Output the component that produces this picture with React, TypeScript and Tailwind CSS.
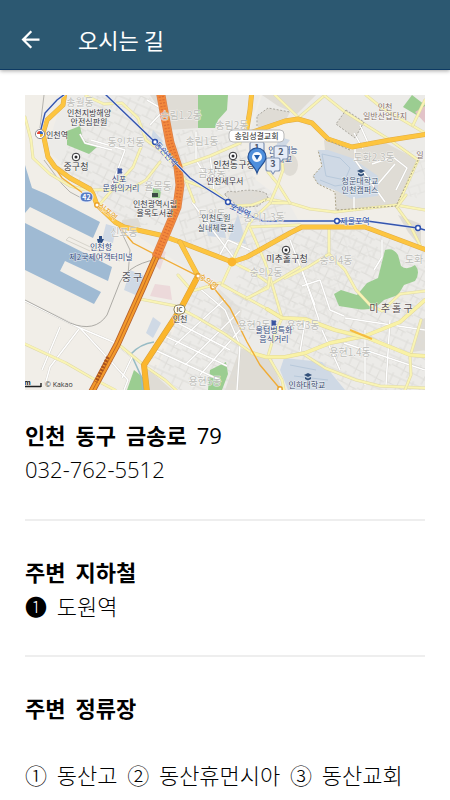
import React from "react";
import { MdArrowBack } from "react-icons/md";

const GAP = "\u00a0 ";

type Label = {
  x: number;
  y: number;
  text: string;
  size?: number;
  color?: string;
  rotate?: number;
};

const AREA = "#bdbdb9";
const NAVY = "#33497c";

const areaNames: Label[] = [
  { x: 80, y: 106, text: "송월동", size: 10 },
  { x: 126, y: 146, text: "동인천동", size: 10 },
  { x: 181, y: 119, text: "송림1.2동", size: 10 },
  { x: 232, y: 129, text: "송림2동", size: 10 },
  { x: 202, y: 145, text: "송림1동", size: 10 },
  { x: 212, y: 177, text: "금창동", size: 10 },
  { x: 158, y: 190, text: "율목동", size: 10 },
  { x: 374, y: 161, text: "도화2.3동", size: 10 },
  { x: 124, y: 236, text: "신포동", size: 10 },
  { x: 212, y: 218, text: "도원동", size: 10 },
  { x: 264, y: 221, text: "숭의1.3동", size: 10 },
  { x: 266, y: 276, text: "숭의2동", size: 10 },
  { x: 336, y: 264, text: "숭의4동", size: 10 },
  { x: 414, y: 263, text: "도화", size: 10 },
  { x: 254, y: 329, text: "용현2동", size: 10 },
  { x: 303, y: 329, text: "용현3동", size: 10 },
  { x: 350, y: 356, text: "용현1.4동", size: 10 },
  { x: 205, y: 385, text: "용현5동", size: 10 },
];

const places: Label[] = [
  { x: 89, y: 116, text: "인천지방해양" },
  { x: 89, y: 125, text: "안전심판원" },
  { x: 57, y: 138, text: "인천역" },
  { x: 76, y: 170, text: "중구청", size: 9 },
  { x: 119, y: 182, text: "신포", color: NAVY },
  { x: 121, y: 191, text: "문화의거리", color: NAVY },
  { x: 155, y: 207, text: "인천광역시립" },
  { x: 155, y: 216, text: "율목도서관" },
  { x: 234, y: 168, text: "인천동구청", size: 9 },
  { x: 225, y: 184, text: "인천세무서" },
  { x: 216, y: 221, text: "인천도원", color: "#3e4c55" },
  { x: 216, y: 231, text: "실내체육관", color: "#3e4c55" },
  { x: 385, y: 110, text: "인천", color: "#856e69" },
  { x: 385, y: 119, text: "일반산업단지", color: "#856e69" },
  { x: 360, y: 184, text: "청운대학교", color: "#405575" },
  { x: 360, y: 193, text: "인천캠퍼스", color: "#405575" },
  { x: 283, y: 153, text: "인천재능", color: NAVY },
  { x: 281, y: 162, text: "대학교", color: NAVY },
  { x: 101, y: 250, text: "인천항", color: NAVY },
  { x: 101, y: 260, text: "제2국제여객터미널", color: NAVY },
  { x: 132, y: 281, text: "중 구", size: 10, color: "#52525b" },
  { x: 287, y: 262, text: "미추홀구청", size: 9 },
  { x: 391, y: 312, text: "미 추 홀 구", size: 10, color: "#594f51" },
  { x: 180, y: 322, text: "인천" },
  { x: 274, y: 333, text: "물텀벙특화", color: NAVY },
  { x: 274, y: 342, text: "음식거리", color: NAVY },
  { x: 307, y: 388, text: "인하대학교", color: "#344768" },
  { x: 355, y: 224, text: "제물포역", color: "#2448a2" },
  { x: 239, y: 213, text: "도원역", color: "#2448a2", rotate: 24 },
  { x: 164, y: 156, text: "동인천역", color: "#2448a2", rotate: 49 },
  { x: 106, y: 214, text: "신포역", color: "#e39c18", rotate: 40 },
  { x: 207, y: 284, text: "숭의역", color: "#e39c18", rotate: 34 },
  { x: 420, y: 158, text: "일", color: "#856e69" },
];

function MapLabel({ x, y, text, size = 8, color = "#34343a", rotate = 0 }: Label) {
  return (
    <text
      x={x}
      y={y}
      fontSize={size}
      fill={color}
      stroke="#ffffff"
      strokeWidth="1"
      strokeOpacity="0.7"
      strokeLinejoin="round"
      paintOrder="stroke"
      textAnchor="middle"
      transform={rotate ? `rotate(${rotate} ${x} ${y})` : undefined}
    >
      {text}
    </text>
  );
}

function Road({ d, w, fill, edge }: { d: string; w: number; fill: string; edge: string }) {
  return (
    <g fill="none" strokeLinejoin="round" strokeLinecap="round">
      <path d={d} stroke={edge} strokeWidth={w + 1} />
      <path d={d} stroke={fill} strokeWidth={w} />
    </g>
  );
}

const minorRoads = [
  "M25 117 L31 140 L33 158 L50 174 L70 186 L86 190",
  "M86 96 L104 104 L122 103 L138 118 L146 140 L160 150 L174 165 L186 181 L194 202",
  "M92 190 L130 189 L146 180 L160 162",
  "M100 204 L112 190 L133 167 L141 147",
  "M178 167 L210 156 L240 143 L246 130",
  "M186 181 L214 191 L232 206 L252 205 L268 199 L290 203",
  "M297 119 L325 95",
  "M366 95 L382 108 L425 133",
  "M325 96 L345 112 L390 140 L418 160 L397 207",
  "M425 100 L413 125",
  "M270 203 L290 203 L310 209 L335 212 L396 205 L425 210",
  "M268 172 L278 184 L290 203",
  "M281 150 L283 170 L278 184 L270 203",
  "M275 95 L297 116",
  "M397 207 L410 225 L421 247",
  "M406 195 L397 207",
  "M248 227 L300 225",
  "M329 229 L329 254 L345 270 L356 290 L370 305 L382 311 L400 294 L425 291",
  "M285 278 L308 267 L329 254",
  "M270 203 L250 222 L242 240 L232 262 L222 284 L247 299 L270 285 L300 267",
  "M250 228 L265 262 L272 284 L282 318",
  "M232 262 L254 273 L270 284",
  "M178 275 L192 291 L220 283",
  "M140 299 L176 306 L198 318 L225 334 L252 353",
  "M222 285 L247 298 L267 309",
  "M247 298 L268 288 L270 275",
  "M282 318 L274 336 L268 356 L282 380 L284 390",
  "M305 355 L325 368 L356 380 L380 386 L425 388",
  "M421 320 L410 357 L411 375 L405 390",
  "M25 344 L66 363 L92 378 L115 390",
  "M118 344 L146 367 L165 380 L176 390",
];

const wideMinorRoads = [
  "M252 353 L266 357 L285 357 L305 353 L330 343 L365 336 L400 322 L425 300",
  "M267 309 L282 318 L305 319 L335 330 L368 338 L410 355 L425 356",
];

const streets = [
  "M25 301 L80 328 L118 344",
  "M80 328 L128 380 L124 390",
  "M117 345 L132 357 L122 378",
  "M60 327 L42 370",
  "M79 329 L50 367 L45 385",
  "M80 134 L85 143 L112 150 M91 140 L125 150 L110 190",
  "M147 100 L164 110 L150 125",
  "M196 132 L196 160 L210 183",
  "M210 155 L214 190",
  "M355 148 L355 160 L385 202",
  "M372 164 L393 157 L407 168 L396 190",
  "M378 184 L395 164",
  "M360 125 L369 145 M354 133 L363 149",
  "M354 197 L354 212",
  "M192 202 L214 232 L234 258",
  "M228 240 L218 258 M228 240 L250 250",
  "M290 240 L315 305",
  "M302 270 L319 320",
  "M382 240 L382 257 L374 270",
  "M302 286 L320 280 L330 310 L344 316",
  "M198 287 L225 310 L240 345 L237 390",
  "M155 350 L220 380 M163 335 L227 366 M172 320 L230 350",
  "M175 345 L225 299 M185 365 L240 311 M200 375 L240 330",
  "M345 318 L425 330 M344 343 L425 370",
  "M365 330 L365 385 M390 320 L386 385",
  "M305 322 L300 352 M322 330 L340 370",
];

const mainRoute =
  "M65 92 L63 105 L47 120 L43 133 L48 157 L55 167 L70 178 L90 189 L93 194 L97 205 L115 222 L124 227 L160 235 L180 242 L232 262 L247 257 L290 233 L302 227 L365 227 L421 248 L430 251";

const northRoutes = [
  "M252 90 L250 110 L246 134",
  "M247 134 L285 121 L298 119 L312 123 L328 139 L352 147 L390 140 L428 134",
];

const highwayNorth = "M160 90 L165 117 L170 143 L178 167 L180 185 L177 207 L170 224 L156 257";
const highway = `${highwayNorth} L143 287 L117 345 L90 395`;

function Office({ x, y }: { x: number; y: number }) {
  return (
    <g>
      <circle cx={x} cy={y} r="3.8" fill="#fff" stroke="#2c2c30" />
      <circle cx={x} cy={y} r="1.5" fill="#2c2c30" />
    </g>
  );
}

function Cap({ x, y }: { x: number; y: number }) {
  return (
    <g fill="#33507a">
      <path d={`M${x - 4} ${y - 1} l4 -2 l4 2 l-4 2 z`} />
      <path d={`M${x - 3} ${y + 1} l3 1.5 l3 -1.5 v2 l-3 1.5 l-3 -1.5 z`} />
    </g>
  );
}

function StopBadge({ x, y, n }: { x: number; y: number; n: string }) {
  return (
    <g>
      <path
        d={`M${x - 5} ${y - 7} h10 q2 0 2 2 v9 q0 2 -2 2 h-3 l-2 3 l-2 -3 h-3 q-2 0 -2 -2 v-9 q0 -2 2 -2 z`}
        fill="#e6ecf7"
        stroke="#8496b6"
        strokeWidth="1.2"
      />
      <text x={x} y={y + 2} fontSize="9" fontWeight="700" fill="#4d5668" textAnchor="middle">
        {n}
      </text>
    </g>
  );
}

function LocationMap() {
  return (
    <svg
      viewBox="25 95 400 295"
      role="img"
      aria-label="인천 동구 금송로 79 지도"
      className="block h-auto w-full font-['Noto_Sans_CJK_KR',sans-serif]"
    >
      <defs>
        <pattern id="blocksA" width="22" height="18" patternUnits="userSpaceOnUse" patternTransform="rotate(24)">
          <path d="M0 3 H22 M0 11 L22 13 M5 0 V11 M14 3 L13 18 M19 12 V18" fill="none" stroke="#dddcd8" />
        </pattern>
        <pattern id="blocksB" width="19" height="21" patternUnits="userSpaceOnUse" patternTransform="rotate(-17)">
          <path d="M0 5 H19 M0 14 L19 12 M4 5 V14 M12 0 L13 21 M17 13 V21" fill="none" stroke="#dddcd8" />
        </pattern>
      </defs>

      <rect x="25" y="95" width="400" height="295" fill="#f1eee8" />

      <g fill="#ecebe8">
        <path d="M64 95 H260 L247 134 L236 145 L256 180 L290 205 L302 227 L365 227 L425 250 V390 H148 L198 276 L124 227 L92 188 L46 150 Z" />
        <path d="M262 95 H425 V210 L396 206 L418 160 L352 147 L328 139 L297 119 L250 132 Z" />
      </g>

      <g fill="#dfdcd5">
        <path d="M150 95 H198 V128 L168 130 L160 110 Z" />
        <path d="M262 95 H316 L297 114 L278 106 Z" />
        <path d="M257 116 L268 108 L290 112 L286 120 L258 128 Z" />
        <path d="M346 110 L364 122 L355 138 L336 124 Z" />
        <path d="M324 140 L352 150 L386 143 L418 160 L396 205 L336 212 L335 190 L350 165 L325 150 Z" />
        <path d="M398 215 L421 224 V248 L408 232 Z" />
        <path d="M240 348 L272 358 L282 390 H225 Z" />
        <path d="M147 368 L172 390 H146 Z" />
        <path d="M225 195 Q225 190 236 192 Q250 188 266 193 L268 198 L258 206 L240 208 Z" />
        <path d="M122 220 L138 218 L141 227 L122 226 Z" />
        <path d="M218 288 L242 310 L236 340 L222 330 Z" opacity=".6" />
        <path d="M421 320 L425 318 V350 L413 352 Z" />
      </g>
      <ellipse cx="290" cy="165" rx="8" ry="11" fill="#dfdcd5" />

      <path d="M67 150 L92 96 H150 L175 165 L170 225 L124 225 L92 188 L58 168 Z" fill="url(#blocksA)" />
      <path d="M176 130 H240 L256 180 L284 205 L290 232 L232 262 L180 240 Z" fill="url(#blocksB)" />
      <path d="M242 258 L302 230 H365 L425 252 V390 H345 L282 350 L222 330 Z" fill="url(#blocksA)" />
      <path d="M242 262 L350 232 L380 252 L336 300 L330 340 L282 318 Z" fill="url(#blocksB)" opacity=".5" />
      <path d="M192 288 L240 310 L240 390 H180 L148 365 Z" fill="url(#blocksA)" />
      <path d="M395 150 H425 V200 L402 195 Z" fill="url(#blocksB)" opacity=".5" />

      <g fill="#9fbad3">
        <path d="M25 165 L32 188 L46 194 L100 222 L93 238 L30 207 L25 213 Z" />
        <path d="M25 223 L112 267 L108 281 L65 261 L60 271 L101 292 L94 304 L25 270 Z" />
      </g>
      <path d="M66 240 L69 237 L120 261 M66 240 L90 251" fill="none" stroke="#d6d3cb" />

      <g fill="#9bcd91">
        <path d="M198 95 H228 L227 110 L218 120 L215 128 H198 Z" />
        <path d="M67 131 L80 126 L83 140 L97 147 L89 154 L67 145 Z" />
        <path d="M412 95 L425 105 V120 L403 107 Z" />
        <path d="M385 250 Q393 247 398 255 L401 266 Q407 271 415 265 Q421 272 415 281 L404 285 L398 295 L384 300 Q373 312 358 309 L339 306 L334 294 L341 290 L357 295 L367 283 L378 278 Z" />
        <path d="M134 370 L144 378 L145 390 H127 Z" />
        <path d="M210 370 L226 362 L228 374 L222 390 H208 Z" />
        <path d="M153 188 L161 190 L160 198 L152 198 Z" />
      </g>
      <path d="M415 112 L425 106 V123 Z" fill="#e2c3c8" />

      <g fill="#cfd9e5">
        <path d="M318 150 H328 L352 158 L378 176 L378 196 L352 199 L337 191 L318 184 L313 176 L322 166 Z" />
        <path d="M284 358 L322 362 L345 390 H288 L280 370 Z" />
        <path d="M238 214 L246 244 L228 240 Z" />
        <path d="M206 225 L222 215 L226 238 L208 236 Z" />
        <path d="M106 224 L116 227 L113 243 L102 240 Z" />
        <path d="M130 270 L144 276 L138 296 L124 290 Z" />
        <path d="M153 317 L161 323 L153 338 L146 333 Z" />
        <path d="M280 137 L290 140 L284 148 L276 146 Z" />
        <path d="M153 130 L163 141 L159 150 L150 143 Z" />
      </g>
      <g fill="none" stroke="#b8c9db">
        <path d="M322 154 L340 158 L350 168 L345 180 L326 176 Z" />
        <path d="M320 180 L335 186 L348 184" />
        <path d="M290 365 L316 370 M294 376 L328 380" />
      </g>
      <path d="M155 284 L170 286 L172 300 L150 296 Z M156 248 L166 252 L160 270 L152 262 Z" fill="#ecd9da" />
      <path d="M131 354 Q140 344 154 342 M131 354 L141 376 L143 390" fill="none" stroke="#98bcc5" strokeWidth="1.6" />

      <g fill="none" stroke="#cfcdc7" strokeWidth="2.2" strokeLinejoin="round">
        {streets.map((d) => (
          <path key={d} d={d} />
        ))}
      </g>
      <g fill="none" stroke="#ffffff" strokeWidth="1.5" strokeLinejoin="round">
        {streets.map((d) => (
          <path key={d} d={d} />
        ))}
      </g>
      <path d="M25 300 L70 323 Q95 333 107 315 L120 282 Q130 262 165 258" fill="none" stroke="#adaba6" />
      <path d="M40 128 L44 95 M44 160 L62 184 L70 192 L85 200 M118 225 L130 250 L128 275" fill="none" stroke="#b5b3ae" />

      {minorRoads.map((d) => (
        <Road key={d} d={d} w={2} fill="#f9f4b4" edge="#e0d9a8" />
      ))}
      {wideMinorRoads.map((d) => (
        <Road key={d} d={d} w={3} fill="#f9f2a6" edge="#e0d79c" />
      ))}

      <g fill="none" stroke="#f0ac36" strokeWidth="1.4">
        <path d="M52 163 L62 178 L87 196" />
        <path d="M115 222 L133 243 L160 257 L198 276 L213 287 L230 308 L247 342 L260 365 L281 390" />
      </g>
      <path d="M350 330 L372 339" stroke="#f6bc3d" strokeWidth="2" />

      {northRoutes.map((d) => (
        <Road key={d} d={d} w={4} fill="#fdc540" edge="#e0ac45" />
      ))}
      <Road d={mainRoute} w={4} fill="#fdc540" edge="#e0ac45" />
      <Road d="M180 242 L198 276" w={4} fill="#fdc540" edge="#e0ac45" />
      <Road d="M198 276 L180 310 L144 365 L147 392" w={5} fill="#fbb62c" edge="#d9a240" />
      <circle cx="232" cy="262" r="4.4" fill="#fbb62c" />
      <path
        d="M325 139 L350 150 M418 160 L396 206 L336 210 L335 192 L318 184 L313 176 L322 166 L318 150"
        fill="none"
        stroke="#aaa288"
        strokeDasharray="2 1.6"
      />
      <path
        d="M346 110 L364 122 L355 138 L336 124 Z M225 195 Q225 190 236 192 Q250 188 266 193 L268 198 L258 206 L240 208 Z M257 126 V116 L268 108 L290 112"
        fill="none"
        stroke="#aaa79f"
        strokeDasharray="2 1.6"
      />

      <g fill="none">
        <path d={highway} stroke="#b5602d" strokeWidth="7" />
        <path d={highway} stroke="#f39a2c" strokeWidth="5.4" />
        <path d={highwayNorth} stroke="#d98350" strokeWidth="9" />
        <path d={highwayNorth} stroke="#f3893c" strokeWidth="7.6" />
        <path d={highwayNorth} stroke="#dc6f35" strokeWidth="5.4" strokeDasharray="1.2 2" />
        <path d={highwayNorth} stroke="#f3893c" />
        <path d="M156 257 L143 287 L117 345 L90 395" stroke="#c26a24" />
        <path d="M108 357 L96 382" stroke="#a9521d" strokeWidth="3.6" strokeDasharray="2 1.4" />
      </g>

      <g fill="none" stroke="#e8eaf3" strokeWidth="2.6">
        <path d="M40 133 L45 113 L57 100 L65 94" />
        <path d="M105 94 L155 142 L190 178 L228 202 L253 217 L263 221 L337 221 L367 221 L418 228 L425 230" />
      </g>
      <g fill="none" stroke="#3455ad" strokeWidth="1.4">
        <path d="M40 133 L45 113 L57 100 L65 94" />
        <path d="M105 94 L155 142 L190 178 L228 202 L253 217 L263 221 L337 221 L367 221 L418 228 L425 230" />
      </g>

      {areaNames.map((l) => (
        <MapLabel key={l.text + l.x} {...l} color={AREA} />
      ))}

      <g fill="#fff" stroke="#2b4fae" strokeWidth="1.5">
        <circle cx="155" cy="142" r="2.4" />
        <circle cx="228" cy="202" r="2.4" />
        <circle cx="337" cy="221" r="2.4" />
        <circle cx="418" cy="228" r="2.4" />
      </g>
      <g fill="#fff" stroke="#eba32a" strokeWidth="1.4">
        <circle cx="97" cy="205" r="2.2" />
        <circle cx="198" cy="276" r="2.2" />
        <circle cx="213" cy="287" r="2.2" />
        <circle cx="280" cy="389" r="2.2" />
      </g>
      <circle cx="40" cy="134" r="4.6" fill="#fff" stroke="#8b8b95" />
      <path d="M40 134 V131 A3 3 0 0 1 43 134 Z" fill="#2f62c2" />
      <path d="M40 134 H37 A3 3 0 0 1 40 131 Z" fill="#e24436" />
      <path d="M40 134 H43 A3 3 0 0 1 40 137 Z" fill="#f0b02c" />

      <rect x="80" y="192" width="13" height="10" rx="5" fill="#587bc3" stroke="#e8eefb" />
      <text x="86.5" y="200" fontSize="7" fontWeight="700" fill="#fff" textAnchor="middle">
        42
      </text>

      <rect x="174" y="305" width="11" height="9" rx="4" fill="#fff" stroke="#8d8358" />
      <text x="179.5" y="312" fontSize="6" fontWeight="700" fill="#5f5737" textAnchor="middle">
        IC
      </text>

      <Office x={76} y={157} />
      <Office x={233} y={156} />
      <Office x={286} y={250} />
      <Cap x={361} y={172} />
      <Cap x={308} y={376} />
      <path d="M118 168 V174 M118 169 H122 L121 171 L122 173 H118" fill="#3a55a0" stroke="#3a55a0" />
      <path d="M272 320 V326 M272 321 H276 L275 323 L276 325 H272" fill="#3a55a0" stroke="#3a55a0" />
      <path d="M97 239 H104 L102 243 H98 Z M99 236 H102 V239 H99 Z" fill="#2f4f86" />
      <rect x="152" y="193" width="6" height="4" fill="#3c4a44" />

      {places.map((l) => (
        <MapLabel key={l.text + l.x} {...l} />
      ))}

      <StopBadge x={257} y={149} n="1" />
      <StopBadge x={281} y={153} n="2" />
      <StopBadge x={273} y={165} n="3" />

      <path
        d="M257 173 C255 166 248 163 248 157 A9 9 0 0 1 266 157 C266 163 259 166 257 173 Z"
        fill="#4f8fdc"
        stroke="#244f93"
        strokeWidth="1.2"
      />
      <circle cx="257" cy="157" r="5" fill="#f4f9ff" />
      <path d="M254 155 H260 L257 160 Z" fill="#1f5bab" />

      <rect x="229" y="130" width="55" height="12" rx="4" fill="#fff" stroke="#b9b9b9" />
      <text x="256.5" y="139" fontSize="8" fill="#222" textAnchor="middle">
        송림성결교회
      </text>

      <path d="M25 386.5 H41 M41 383 V387" fill="none" stroke="#222" strokeWidth="1.4" />
      <text x="24" y="385" fontSize="7" fontWeight="700" fill="#222">
        m
      </text>
      <text x="45" y="387" fontSize="7" fontWeight="500" fill="#333" className="font-['Open_Sans',sans-serif]">
        © Kakao
      </text>
    </svg>
  );
}

function Divider() {
  return <hr className="mt-[33px] mb-[33px] border-t-2 border-[#eeeeee]" />;
}

export default function App() {
  return (
    <div className="min-h-screen bg-white font-['Noto_Sans_CJK_KR',sans-serif] text-[22px] leading-[34px] text-black">
      <header className="flex items-center border-b border-[#0d3a63] bg-[#2c5871] px-[17px] pt-[23px] pb-[14px] text-white shadow-[0_1px_4px_rgba(0,0,0,0.35)]">
        <button type="button" aria-label="뒤로" className="flex h-8 items-center">
          <MdArrowBack className="size-[27px]" />
        </button>
        <h1 className="ml-[34px] text-[22px] leading-8 font-normal">오시는 길</h1>
      </header>

      <main className="px-[25px] pt-[25px] pb-6">
        <LocationMap />

        <section className="mt-[27px]">
          <h2 className="font-bold">
            {["인천", "동구", "금송로"].join(GAP) + GAP}
            <span className="font-['Open_Sans',sans-serif] font-medium">79</span>
          </h2>
          <p className="font-['Open_Sans','Noto_Sans_CJK_KR',sans-serif] font-light">032-762-5512</p>
        </section>

        <Divider />

        <section>
          <h2 className="font-bold">{["주변", "지하철"].join(GAP)}</h2>
          <p className="font-light">{["❶", "도원역"].join(GAP)}</p>
        </section>

        <Divider />

        <section>
          <h2 className="font-bold">{["주변", "정류장"].join(GAP)}</h2>
          <p className="mt-[33px] font-light">
            {["①", "동산고", "②", "동산휴먼시아", "③", "동산교회"].join(GAP)}
          </p>
        </section>
      </main>
    </div>
  );
}
